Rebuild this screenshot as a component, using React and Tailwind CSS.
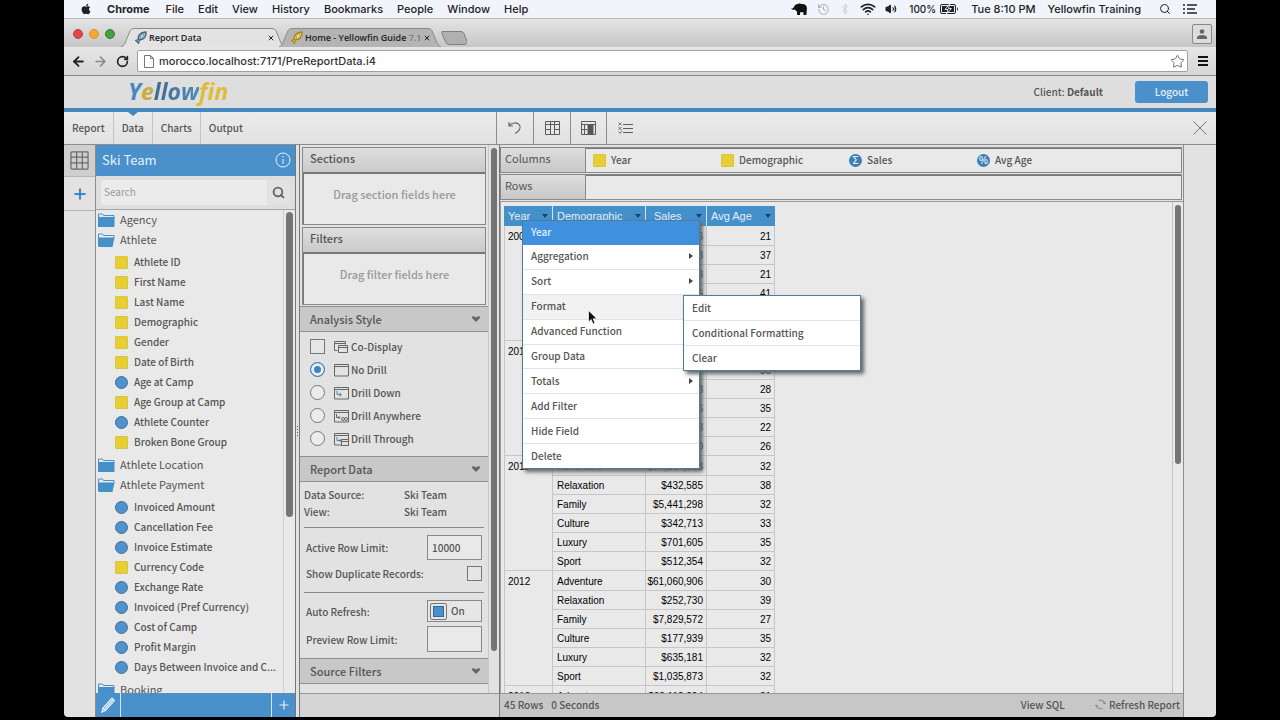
import { useState } from "react";
import { FaApple } from "react-icons/fa";
import { Star, History, Bluetooth, Wifi, Volume2, Search, X, Plus, ArrowLeft, ArrowRight, RotateCw } from "lucide-react";

const MENU_BAR = ["File", "Edit", "View", "History", "Bookmarks", "People", "Window", "Help"];

const FIELD_TREE = [
  { name: "Agency", fields: [] },
  {
    name: "Athlete",
    open: true,
    fields: [
      ["Athlete ID", "dim"],
      ["First Name", "dim"],
      ["Last Name", "dim"],
      ["Demographic", "dim"],
      ["Gender", "dim"],
      ["Date of Birth", "dim"],
      ["Age at Camp", "metric"],
      ["Age Group at Camp", "dim"],
      ["Athlete Counter", "metric"],
      ["Broken Bone Group", "dim"],
    ],
  },
  { name: "Athlete Location", fields: [] },
  {
    name: "Athlete Payment",
    open: true,
    fields: [
      ["Invoiced Amount", "metric"],
      ["Cancellation Fee", "metric"],
      ["Invoice Estimate", "metric"],
      ["Currency Code", "dim"],
      ["Exchange Rate", "metric"],
      ["Invoiced (Pref Currency)", "metric"],
      ["Cost of Camp", "metric"],
      ["Profit Margin", "metric"],
      ["Days Between Invoice and C...", "metric"],
    ],
  },
  { name: "Booking", fields: [] },
];

const REPORT = [
  {
    year: "2009",
    rows: [
      ["Adventure", "$48,310,296", 21],
      ["Relaxation", "$310,448", 37],
      ["Family", "$4,120,838", 21],
      ["Culture", "$298,106", 41],
      ["Luxury", "$588,420", 33],
      ["Sport", "$476,918", 30],
    ],
  },
  {
    year: "2010",
    rows: [
      ["Adventure", "$52,718,640", 31],
      ["Relaxation", "$398,276", 36],
      ["Family", "$4,902,118", 28],
      ["Culture", "$320,596", 35],
      ["Luxury", "$640,238", 22],
      ["Sport", "$498,760", 26],
    ],
  },
  {
    year: "2011",
    rows: [
      ["Adventure", "$57,204,318", 32],
      ["Relaxation", "$432,585", 38],
      ["Family", "$5,441,298", 32],
      ["Culture", "$342,713", 33],
      ["Luxury", "$701,605", 35],
      ["Sport", "$512,354", 32],
    ],
  },
  {
    year: "2012",
    rows: [
      ["Adventure", "$61,060,906", 30],
      ["Relaxation", "$252,730", 39],
      ["Family", "$7,829,572", 27],
      ["Culture", "$177,939", 35],
      ["Luxury", "$635,181", 32],
      ["Sport", "$1,035,873", 32],
    ],
  },
  { year: "2013", rows: [["Adventure", "$63,118,204", 31]] },
];

const CONTEXT_MENU = [
  { label: "Aggregation", sub: true },
  { label: "Sort", sub: true },
  { label: "Format", active: true },
  { label: "Advanced Function" },
  { label: "Group Data" },
  { label: "Totals", sub: true },
  { label: "Add Filter" },
  { label: "Hide Field" },
  { label: "Delete" },
];

const DRILL_OPTIONS = [
  ["none", "No Drill"],
  ["down", "Drill Down"],
  ["anywhere", "Drill Anywhere"],
  ["through", "Drill Through"],
];

const ElephantIcon = () => (
  <svg viewBox="0 0 18 14" className="h-[13px] w-[17px]" fill="#111">
    <path d="M0 5.5c1 .8 2 .6 2.800-.8C3.600 2.400 5 1 7.200 1c1.400-.9 3.200-.6 4.300.2 3-.3 5.300 1.400 5.500 4.300.1 1.500-.2 2.500-.3 3.800l-.3 3.500h-3l-.3-3.100c-1 .4-2.200.4-3.300.1l-.3 3.200H6.500L6.200 9C5 8.700 4.500 7.800 4.200 6.800 2.800 8 .8 7.600 0 5.500z" />
  </svg>
);

const BatteryIcon = () => (
  <svg viewBox="0 0 19 10" className="h-[10px] w-[19px]">
    <rect x="0.5" y="0.500" width="15" height="9" rx="1.500" fill="none" stroke="#222" />
    <rect x="2" y="2" width="12" height="6" fill="#222" />
    <path d="M9.500 0 5 5.500h3L6.500 10 11.500 4.500h-3z" fill="#222" stroke="#f1f4fa" strokeWidth="0.900" />
    <path d="M17 3.200c1.300.5 1.300 3.100 0 3.600z" fill="#222" />
  </svg>
);

const FishIcon = ({ fill, stroke }) => (
  <svg viewBox="0 0 12 13" className="h-[13px] w-[12px] shrink-0">
    <path d="M3.500 8.500C2.500 5 5 1.200 10.800 1c.8 5-2.300 8-6.800 7.800" fill={fill} stroke={stroke} strokeWidth="1.400" />
    <path d="M4 8.500.8 9.500l2.700 2.800L4.500 9" fill={fill} stroke={stroke} strokeWidth="1.200" />
    <ellipse cx="7" cy="5.200" rx="1.200" ry="2.400" transform="rotate(40 7 5.200)" fill="#f4f4f4" stroke={stroke} strokeWidth="0.700" />
  </svg>
);

const TabShape = ({ fill }) => (
  <svg viewBox="0 0 164 19" preserveAspectRatio="none" className="absolute inset-0 h-full w-full">
    <path d="M0 19 Q3 18 4 15 L9 3 Q10 .5 13 .5 H151 Q154 .5 155 3 L160 15 Q161 18 164 19" fill={fill} stroke="#8a8a8a" />
  </svg>
);

const FolderIcon = ({ open }) => (
  <svg viewBox="0 0 17 14" className="h-[14px] w-[17px] shrink-0">
    <path d="M.5 13V1h4l1 1.500h10.500V5" fill="#e9e9e9" stroke="#4a90c8" />
    {open ? (
      <path d="M0 4.500h16.500L14.500 14H.5z" fill="#4490c8" />
    ) : (
      <path d="M0 4h16.500v10H0z" fill="#4490c8" />
    )}
  </svg>
);

const FieldIcon = ({ kind }) =>
  kind === "dim" ? (
    <span className="size-[13px] shrink-0 rounded-[1px] border border-[#d9c53c] bg-[#e8ce36]" />
  ) : (
    <span className="size-[13px] shrink-0 rounded-full border border-[#3f7099] bg-[#4f92cc]" />
  );

const DrillIcon = ({ kind }) => (
  <svg viewBox="0 0 16 14" className="h-[14px] w-[16px] shrink-0" fill="none" stroke="#666">
    {kind === "codisplay" ? (
      <>
        <path d="M1.500 10.500v-9h11v3M1.500 3.500h11M1.500 10.500h3" />
        <path d="M5.500 5.500h9v7h-9zM5.500 7.500h9" fill="#e2e2e2" />
      </>
    ) : (
      <path d="M1.500 1.500h14v11.500h-14zM1.500 3.500h14" />
    )}
    {kind === "down" && <path d="M4 5v3.500h4M6.500 7l2 1.800-2 1.700" stroke="#4a7fae" />}
    {kind === "anywhere" && (
      <>
        <path d="M3.500 5v3.500h3M5.500 7l1.500 1.500L5.500 10" />
        <circle cx="10" cy="10" r="1.500" />
        <circle cx="13" cy="10" r="1.500" />
      </>
    )}
    {kind === "through" && (
      <>
        <path d="M4 5v3.500h4M6.500 7l1.500 1.500L6.500 10" stroke="#4a7fae" />
        <path d="M8.500 7.500h7v6h-7zM8.500 9.500h7" fill="#e2e2e2" />
      </>
    )}
  </svg>
);

const TableIcon = ({ className }) => (
  <svg viewBox="0 0 20 20" className={className} fill="none" stroke="#6b6b6b" strokeWidth="1.300">
    <rect x="1" y="1" width="18" height="18" rx="1" />
    <path d="M1 6.500h18M1 12.500h18M7 1v18M13 1v18" />
  </svg>
);

const UndoIcon = () => (
  <svg viewBox="0 0 16 14" className="h-[14px] w-[16px]" fill="none" stroke="#666" strokeWidth="1.100">
    <path d="M2 1v4h4M2 4.500C5 1.500 10 .8 12.500 4c2 3-.5 6.500-4.500 8.500" />
  </svg>
);

const ColumnsIcon = () => (
  <svg viewBox="0 0 15 14" className="h-[14px] w-[15px]" fill="none" stroke="#5c5c5c">
    <path d="M.5.5h14v3H.5zM.5 3.500h14v10H.5zM5.500.5v13M9.500.5v13M.5 8.500h5M9.500 8.500h5" />
  </svg>
);

const HighlightColumnIcon = () => (
  <svg viewBox="0 0 15 14" className="h-[14px] w-[15px]" fill="none" stroke="#5c5c5c">
    <path d="M.5.5h14v13H.5zM.5 3.500h14M.5 8.500h6M3.500 3.500v10" />
    <path d="M7 3.500h5v10H7z" fill="#555" />
  </svg>
);

const ListIcon = () => (
  <svg viewBox="0 0 15 13" className="h-[13px] w-[15px]" fill="none" stroke="#5c5c5c">
    <path d="M5 2.500h10M5 6.500h10M5 10.500h10" />
    <path d="M.5.5l3 3m0-3-3 3M.5 5l3 3m0-3-3 3M.5 9.500l1.500 2 2-3" strokeWidth="0.800" />
  </svg>
);

const Caret = () => (
  <svg viewBox="0 0 8 6" className="h-[6px] w-[8px]" fill="#666">
    <path d="M.5 0Q2.500 0 4 1.500 5.500 0 7.500 0L8 2 4 6 0 2z" />
  </svg>
);

const MacMenuBar = () => (
  <div className="flex h-[18px] shrink-0 items-center justify-between bg-[#f1f4fa] pl-[16px] pr-[19px] font-['Inter',sans-serif] text-[11px] font-medium leading-[18px] text-[#222]">
    <nav className="flex items-center gap-[14px]">
      <FaApple className="mr-[1px] size-[12px]" aria-label="Apple" />
      <span className="mr-[2px] font-bold">Chrome</span>
      {MENU_BAR.map((item) => (
        <span key={item}>{item}</span>
      ))}
    </nav>
    <div className="flex items-center gap-[12px]">
      <div className="flex items-center gap-[9px]">
        <ElephantIcon />
        <History className="size-[13px] text-[#999]" strokeWidth={1.500} />
        <Bluetooth className="size-[12px] text-[#ccc]" />
        <Wifi className="size-[16px]" strokeWidth={2.500} />
        <Volume2 className="size-[12px]" fill="#222" />
      </div>
      <span className="flex items-center gap-[4px] text-[10px]">
        100% <BatteryIcon />
      </span>
      <span>Tue 8:10 PM</span>
      <span>Yellowfin Training</span>
      <Search className="ml-[6px] size-[12px]" />
      <svg viewBox="0 0 14 10" className="h-[10px] w-[14px]" stroke="#222" strokeWidth="1.500">
        <path d="M0 1h2M4 1h10M0 5h2M4 5h8M0 9h2M4 9h10" />
      </svg>
    </div>
  </div>
);

const BrowserChrome = () => (
  <div className="shrink-0 font-['Inter',sans-serif] text-[#222]">
    <div className="flex h-[29px] items-end border-t border-[#bbb] bg-gradient-to-b from-[#e4e4e4] to-[#c6c6c6] pl-[9px] pr-[4px]">
      <div className="mb-[8px] flex gap-[6px]">
        <span className="size-[10px] rounded-full border border-[#b9403b] bg-[#dd4a45]" />
        <span className="size-[10px] rounded-full border border-[#d8952a] bg-[#f3a935]" />
        <span className="size-[10px] rounded-full border border-[#317d2b] bg-[#43a23b]" />
      </div>
      <div className="relative ml-[6px] flex h-[19px] w-[164px] items-center">
        <TabShape fill="#e3e3e3" />
        <span className="relative flex w-full items-center pl-[14px] pr-[10px] text-[9px]">
          <FishIcon fill="#b9cbd9" stroke="#3f627d" />
          <span className="ml-[2px] flex-1 font-['Open_Sans',sans-serif] font-semibold">Report Data</span>
          <X className="size-[8px]" strokeWidth={3} />
        </span>
      </div>
      <div className="relative -ml-[6px] flex h-[19px] w-[162px] items-center">
        <TabShape fill="#b4b4b4" />
        <span className="relative flex w-full items-center pl-[12px] pr-[10px] text-[9px]">
          <FishIcon fill="#eed545" stroke="#a8861b" />
          <span className="ml-[2px] flex-1 whitespace-nowrap font-['Open_Sans',sans-serif] font-semibold">
            Home - Yellowfin Guide <span className="text-[#777]">7.1</span>
          </span>
          <X className="size-[8px]" strokeWidth={3} />
        </span>
      </div>
      <svg viewBox="0 0 26 14" className="mb-[2px] h-[14px] w-[26px]">
        <path d="M1 .5h19q2 0 3 2l3 8q0 3-2 3H8q-2 0-3-2L1 3z" fill="#b0b0b0" stroke="#808080" />
      </svg>
      <button aria-label="Profile" className="mb-[3px] ml-auto flex size-[20px] items-center justify-center rounded-[2px] border border-[#888] bg-[#dcdcdc]">
        <svg viewBox="0 0 10 10" className="size-[10px]" fill="#666">
          <circle cx="5" cy="2.500" r="2.300" />
          <path d="M0 10V8q1-2 5-2t5 2v2z" />
        </svg>
      </button>
    </div>
    <div className="flex h-[29px] items-center border-b border-[#888] bg-gradient-to-b from-[#e6e6e6] to-[#d6d6d6] pl-[7px] pr-[8px]">
      <button aria-label="Back"><ArrowLeft className="size-[15px]" strokeWidth={3} /></button>
      <button aria-label="Forward" className="ml-[7px] text-[#888]"><ArrowRight className="size-[15px]" strokeWidth={2.500} /></button>
      <button aria-label="Reload" className="ml-[8px]"><RotateCw className="size-[13px]" strokeWidth={3} /></button>
      <div className="ml-[8px] flex h-[22px] flex-1 items-center rounded-[2px] border border-[#a0a0a0] bg-white pl-[6px] pr-[2px]">
        <svg viewBox="0 0 10 13" className="h-[13px] w-[10px]" fill="#fff" stroke="#777">
          <path d="M.5.5h6l3 3v9h-9zM6.500.5v3h3" />
        </svg>
        <input
          aria-label="Address"
          defaultValue="morocco.localhost:7171/PreReportData.i4"
          className="ml-[5px] flex-1 bg-transparent text-[11px] font-medium text-[#333] outline-none"
        />
        <Star className="size-[15px] text-[#666]" strokeWidth={1.500} />
      </div>
      <button aria-label="Chrome menu" className="ml-[10px] flex w-[10px] flex-col gap-[2px]">
        <span className="h-[2px] bg-[#111]" />
        <span className="h-[2px] bg-[#111]" />
        <span className="h-[2px] bg-[#111]" />
      </button>
    </div>
  </div>
);

const Header = () => (
  <header className="flex h-[36px] shrink-0 items-center justify-between border-b-4 border-[#4488bd] bg-[#dedede] pl-[64px] pr-[8px]">
    <a href="#home" className="flex items-baseline pb-[2px] font-['Open_Sans',sans-serif] text-[23px] font-bold italic leading-[30px]">
      <span className="text-[#4689bd]">Y</span>
      <span className="text-[#c9ad3e]">e</span>
      <span className="bg-gradient-to-r from-[#3f6a90] to-[#4f8bb8] bg-clip-text text-transparent">llow</span>
      <span className="text-[#dfbd3c]">fin</span>
    </a>
    <div className="flex items-center gap-[32px] text-[10px] font-medium">
      <span className="pb-[2px]">
        Client: <b>Default</b>
      </span>
      <button className="h-[22px] w-[73px] rounded-[3px] bg-[#4a90cb] leading-[20px] text-[#e6f0f8]">Logout</button>
    </div>
  </header>
);

const NavBar = () => (
  <div className="flex h-[33px] shrink-0 border-b border-[#8c8c8c] bg-gradient-to-b from-[#ebebeb] to-[#e2e2e2] text-[10px] font-medium">
    <nav className="flex w-[433px] border-r border-[#8c8c8c]">
      {["Report", "Data", "Charts", "Output"].map((tab) => (
        <button key={tab} className="relative border-r border-[#c4c4c4] px-[8px] pb-[2px] last:border-r-0">
          {tab === "Data" && (
            <span className="absolute left-1/2 top-0 -ml-[5px] border-x-[5px] border-t-[4px] border-x-transparent border-t-[#4488bd]" />
          )}
          {tab}
        </button>
      ))}
    </nav>
    <button aria-label="Undo" className="flex w-[37px] items-center justify-center border-r border-[#8c8c8c]"><UndoIcon /></button>
    <button aria-label="Columns" className="flex w-[37px] items-center justify-center border-r border-[#8c8c8c]"><ColumnsIcon /></button>
    <button aria-label="Column style" className="flex w-[36px] items-center justify-center border-r border-[#8c8c8c]"><HighlightColumnIcon /></button>
    <button aria-label="Report options" className="flex w-[36px] items-center justify-center"><ListIcon /></button>
    <button aria-label="Close" className="ml-auto mr-[9px]">
      <svg viewBox="0 0 14 14" className="size-[14px]" stroke="#777">
        <path d="M.5.5l13 13M13.500.5l-13 13" />
      </svg>
    </button>
  </div>
);

const FieldPanel = () => (
  <>
    <div className="flex w-[32px] shrink-0 flex-col border-r border-[#8c8c8c]">
      <button aria-label="Tables" className="flex h-[32px] items-center justify-center border-b border-[#b5b5b5] bg-[#cfcfcf]">
        <TableIcon className="size-[19px]" />
      </button>
      <button aria-label="Add" className="flex h-[34px] items-center justify-center border-b border-[#b5b5b5] text-[#3c86c2]">
        <Plus className="size-[16px]" strokeWidth={3} />
      </button>
    </div>
    <aside className="flex w-[200px] shrink-0 flex-col border-r border-[#777] bg-[#e9e9e9]">
      <div className="flex h-[31px] shrink-0 items-center justify-between bg-[#4a90cb] pb-[1px] pl-[6px] pr-[4px] text-[13px] text-[#e8f2fa]">
        Ski Team
        <svg viewBox="0 0 16 16" className="size-[16px]" fill="none" stroke="#e8f2fa">
          <circle cx="8" cy="8" r="7" />
          <path d="M8 7v5M8 4v1.500" />
        </svg>
      </div>
      <div className="h-[34px] shrink-0 border-b border-[#a5a5a5] bg-[#dedede] px-[5px] py-[4px]">
        <div className="flex h-[25px] rounded-[3px] bg-[#ebebeb]">
          <input aria-label="Search fields" placeholder="Search" className="w-[166px] pb-[2px] pl-[3px] text-[10px] outline-none placeholder:text-[#999]" />
          <button aria-label="Search" className="flex flex-1 items-center justify-center bg-[#e2e2e2] text-[#666]">
            <Search className="size-[13px]" strokeWidth={3.500} />
          </button>
        </div>
      </div>
      <div className="flex min-h-0 flex-1">
        <div className="flex-1 overflow-hidden">
          {FIELD_TREE.map((folder) => (
            <div key={folder.name}>
              <div className="flex h-[20px] items-center gap-[5px] pl-[2px] text-[11px] leading-[18px]">
                <FolderIcon open={folder.open} />
                <span className="pb-[2px]">{folder.name}</span>
              </div>
              {folder.fields.length > 0 && (
                <div className="pb-[3px] pt-[2px]">
                  {folder.fields.map(([name, kind]) => (
                    <div key={name} className="flex h-[20px] items-center gap-[6px] whitespace-nowrap pl-[19px] text-[10px] font-medium leading-[20px]">
                      <FieldIcon kind={kind} />
                      <span>{name}</span>
                    </div>
                  ))}
                </div>
              )}
            </div>
          ))}
        </div>
        <div className="w-[12px] border-l border-[#cfcfcf] px-[2px] pt-[2px]">
          <div className="h-[305px] w-[7px] rounded-full bg-[#757575]" />
        </div>
      </div>
      <div className="flex h-[24px] shrink-0 bg-[#4a90cb]">
        <button aria-label="Edit" className="flex w-[25px] items-center justify-center border-r border-[#d5e5f2]">
          <svg viewBox="0 0 14 16" className="h-[16px] w-[14px]" fill="none" stroke="#e8f2fa" strokeWidth="1.200">
            <path d="M1 15l1-4L11 1l2.500 2.500L4.500 13.500zM2 11l2.500 2.500M4 11.500 12 2.500" />
          </svg>
        </button>
        <button aria-label="Add field" className="ml-auto flex w-[24px] items-center justify-center border-l border-[#d5e5f2] text-[#e8f2fa]">
          <Plus className="size-[14px]" />
        </button>
      </div>
    </aside>
  </>
);

const DropBox = ({ title, hint }) => (
  <div className="mx-[2px] border border-[#888]">
    <div className="h-[24px] bg-gradient-to-b from-[#dedede] to-[#cacaca] pl-[7px] text-[11px] font-medium leading-[21px]">{title}</div>
    <div className="h-[52px] border-l border-t-2 border-[#777] bg-[#e9e9e9] text-center text-[11px] leading-[40px] text-[#999]">{hint}</div>
  </div>
);

const SectionHeader = ({ children }) => (
  <button className="flex h-[26px] w-full items-center justify-between border-y border-[#8f8f8f] bg-[#c8c8c8] pl-[10px] pr-[8px] text-[11px] font-medium leading-[22px]">
    {children}
    <Caret />
  </button>
);

const OptionsPanel = () => {
  const [drill, setDrill] = useState("none");
  const [autoRefresh, setAutoRefresh] = useState(true);

  return (
    <section className="flex w-[201px] shrink-0 flex-col border-x border-[#777] bg-[#e2e2e2]">
      <div className="flex min-h-0 flex-1">
        <div className="flex w-[188px] flex-col overflow-hidden pt-[2px] text-[10px] font-medium">
          <div className="flex flex-col gap-[2px]">
            <DropBox title="Sections" hint="Drag section fields here" />
            <DropBox title="Filters" hint="Drag filter fields here" />
          </div>
          <div className="mt-[1px]">
            <SectionHeader>Analysis Style</SectionHeader>
          </div>
          <div className="pb-[6px] pt-[3px]">
            <label className="flex h-[23px] items-center pl-[10px] leading-[23px]">
              <input type="checkbox" className="size-[15px] appearance-none border border-[#777] bg-[#e6e6e6]" />
              <span className="ml-[8px]"><DrillIcon kind="codisplay" /></span>
              <span className="ml-[2px]">Co-Display</span>
            </label>
            {DRILL_OPTIONS.map(([value, label]) => (
              <label key={value} className="flex h-[23px] items-center pl-[10px] leading-[23px]">
                <input
                  type="radio"
                  name="drill"
                  checked={drill === value}
                  onChange={() => setDrill(value)}
                  className="size-[15px] appearance-none rounded-full border border-[#777] bg-[#ececec] checked:border-[#3c7db4] checked:bg-[#3c86c2] checked:shadow-[inset_0_0_0_3px_#ececec]"
                />
                <span className="ml-[8px]"><DrillIcon kind={value} /></span>
                <span className="ml-[2px]">{label}</span>
              </label>
            ))}
          </div>
          <SectionHeader>Report Data</SectionHeader>
          <dl className="mx-[4px] grid grid-cols-[100px_1fr] border-b border-[#888] pb-[7px] pt-[4px] leading-[17px]">
            <dt>Data Source:</dt>
            <dd>Ski Team</dd>
            <dt>View:</dt>
            <dd>Ski Team</dd>
          </dl>
          <div className="mx-[4px] flex flex-col gap-[6px] border-b border-[#888] pb-[11px] pl-[2px] pr-[2px] pt-[7px]">
            <label className="flex h-[25px] items-center justify-between">
              Active Row Limit:
              <input defaultValue="10000" className="h-[25px] w-[55px] border border-[#888] bg-[#e9e9e9] px-[4px] outline-none" />
            </label>
            <label className="flex h-[15px] items-center justify-between">
              Show Duplicate Records:
              <input type="checkbox" className="size-[15px] appearance-none border border-[#777] bg-[#e6e6e6]" />
            </label>
          </div>
          <div className="mx-[4px] flex flex-col gap-[4px] px-[2px] pb-[6px] pt-[7px]">
            <div className="flex h-[22px] items-center justify-between">
              <span id="auto-refresh">Auto Refresh:</span>
              <button
                role="switch"
                aria-checked={autoRefresh}
                aria-labelledby="auto-refresh"
                onClick={() => setAutoRefresh(!autoRefresh)}
                className="flex h-[22px] w-[55px] items-center gap-[4px] border border-[#888] bg-[#e6e6e6] pl-[2px] leading-[18px]"
              >
                <span className="flex size-[17px] items-center justify-center rounded-[2px] border border-[#777]">
                  <span className="size-[11px] border border-[#2f6a9c] bg-[#4a90cb]" />
                </span>
                {autoRefresh ? "On" : "Off"}
              </button>
            </div>
            <label className="flex h-[26px] items-center justify-between">
              Preview Row Limit:
              <input className="h-[26px] w-[55px] border border-[#888] bg-[#e9e9e9] px-[4px] outline-none" />
            </label>
          </div>
          <SectionHeader>Source Filters</SectionHeader>
        </div>
        <div className="flex-1 border-l border-[#c8c8c8] px-[2px] pt-[3px]">
          <div className="h-[503px] w-[6px] rounded-full bg-[#757575]" />
        </div>
      </div>
      <div className="h-[24px] shrink-0 border-t border-[#999] bg-[#d5d5d5]" />
    </section>
  );
};

const Shelf = ({ title, children }) => (
  <div className="mr-[1px] flex h-[26px] border border-[#888]">
    <div className="w-[85px] shrink-0 border-r border-[#888] bg-gradient-to-b from-[#dedede] to-[#c8c8c8] pl-[4px] text-[11px] leading-[20px]">
      {title}
    </div>
    <div className="flex flex-1 items-center border-t border-[#777] bg-[#e9e9e9] pl-[7px]">{children}</div>
  </div>
);

const ShelfField = ({ kind, symbol, children }) => (
  <div className="flex w-[128px] items-center gap-[5px] pb-[1px] text-[10px] font-medium leading-[20px]">
    {symbol ? (
      <span className="flex size-[13px] items-center justify-center rounded-full bg-[#3d7fb5] font-['Liberation_Sans',sans-serif] text-[10px] leading-[13px] text-white">
        {symbol}
      </span>
    ) : (
      <FieldIcon kind={kind} />
    )}
    {children}
  </div>
);

const ReportTable = () => (
  <table className="w-[271px] table-fixed border-separate border-spacing-0 font-['Liberation_Sans',Arial,sans-serif] text-[10px] text-black">
    <colgroup>
      <col className="w-[49px]" />
      <col className="w-[93px]" />
      <col className="w-[61px]" />
      <col className="w-[68px]" />
    </colgroup>
    <thead>
      <tr>
        {["Year", "Demographic", "Sales", "Avg Age"].map((name) => (
          <th key={name} className="h-[20px] border-r border-[#d8e4ee] bg-[#4490cb] p-0 text-left text-[11px] font-normal text-[#e4eef6] last:border-r-0">
            <span className={`flex items-center justify-between pr-[4px] ${name === "Sales" ? "pl-[8px]" : "pl-[4px]"}`}>
              {name}
              <span className="border-x-[3px] border-t-[4px] border-x-transparent border-t-[#1d4466]" />
            </span>
          </th>
        ))}
      </tr>
    </thead>
    <tbody className="leading-[16px]">
      {REPORT.map(({ year, rows }) =>
        rows.map(([demographic, sales, age], i) => (
          <tr key={year + demographic} className={i === 0 ? "h-[20px]" : "h-[19px]"}>
            {i === 0 && (
              <td rowSpan={rows.length} className="border-x border-b border-[#c6c6c6] p-0 pl-[3px] pt-[3px] align-top">
                {year}
              </td>
            )}
            <td className="border-b border-r border-[#c6c6c6] p-0 pl-[4px] pt-[2px]">{demographic}</td>
            <td className="border-b border-r border-[#c6c6c6] p-0 pr-[3px] pt-[2px] text-right">{sales}</td>
            <td className="border-b border-r border-[#c6c6c6] p-0 pr-[3px] pt-[2px] text-right">{age}</td>
          </tr>
        ))
      )}
    </tbody>
  </table>
);

const ContextMenu = () => (
  <>
    <div role="menu" className="absolute left-[18px] top-[14px] flex h-[249px] w-[178px] flex-col border border-[#4d7f9c] bg-white text-[10px] font-medium text-[#555] shadow-[3px_3px_4px_#666]">
      <div className="flex flex-1 items-center bg-[#3f90df] pb-[1px] pl-[8px] leading-[20px] text-[#e4f0fb]">Year</div>
      {CONTEXT_MENU.map(({ label, sub, active }) => (
        <button
          key={label}
          role="menuitem"
          className={`flex flex-1 items-center justify-between border-b border-[#e4e4e4] pb-[1px] pl-[8px] pr-[6px] leading-[20px] last:border-b-0 ${active ? "bg-[#f2f2f2]" : ""}`}
        >
          {label}
          {sub && <span className="border-y-[3px] border-l-[4px] border-y-transparent border-l-[#444]" />}
        </button>
      ))}
    </div>
    <div role="menu" className="absolute left-[179px] top-[89px] flex h-[76px] w-[178px] flex-col border border-[#4d7f9c] bg-white text-[10px] font-medium text-[#555] shadow-[3px_3px_4px_#666]">
      {["Edit", "Conditional Formatting", "Clear"].map((label) => (
        <button key={label} role="menuitem" className="flex flex-1 items-center border-b border-[#e4e4e4] pl-[8px] leading-[20px] last:border-b-0">
          {label}
        </button>
      ))}
    </div>
    <svg viewBox="0 0 10 15" className="absolute left-[84px] top-[104px] h-[15px] w-[10px]">
      <path d="M.5.5v11.500l2.700-2.500 1.800 4.500 2-.8-1.800-4.400h3.800z" fill="#111" stroke="#fff" strokeWidth="0.700" />
    </svg>
  </>
);

const ReportArea = () => (
  <main className="flex min-w-0 flex-1 flex-col border-r border-[#8c8c8c] bg-[#e2e2e2]">
    <div className="flex shrink-0 flex-col gap-[1px] pb-[1px] pt-[2px]">
      <Shelf title="Columns">
        <ShelfField kind="dim">Year</ShelfField>
        <ShelfField kind="dim">Demographic</ShelfField>
        <ShelfField symbol="Σ">Sales</ShelfField>
        <ShelfField symbol="%">Avg Age</ShelfField>
      </Shelf>
      <Shelf title="Rows" />
    </div>
    <div className="flex min-h-0 flex-1 border-l border-t border-[#999] bg-[#e9e9e9]">
      <div className="relative ml-[3px] mt-[4px] flex-1">
        <div className="h-full overflow-hidden">
          <ReportTable />
        </div>
        <ContextMenu />
      </div>
      <div className="w-[11px] border-l border-[#c4c4c4] px-[2px] pt-[3px]">
        <div className="h-[259px] w-[6px] rounded-full bg-[#757575]" />
      </div>
    </div>
    <footer className="flex h-[24px] shrink-0 items-center border-t border-[#999] bg-[#c7c7c7] pb-[2px] pl-[4px] pr-[3px] text-[10px] font-medium leading-[20px]">
      <span>45 Rows</span>
      <span className="ml-[8px]">0 Seconds</span>
      <button className="ml-auto">View SQL</button>
      <button className="ml-[30px] flex items-center gap-[3px]">
        <svg viewBox="0 0 12 12" className="size-[11px]" fill="none" stroke="#5b83a3">
          <path d="M4 1.500h3q3.500 0 3.500 4M9 4l1.500 1.500L12 4M8 10.500H5q-3.500 0-3.500-4M0 8l1.500-1.500L3 8" />
        </svg>
        Refresh Report
      </button>
    </footer>
  </main>
);

export default function App() {
  return (
    <div className="flex h-screen flex-col overflow-hidden bg-black px-[64px] pb-[3px] font-['Noto_Sans_CJK_SC','Noto_Sans_CJK_JP',sans-serif] text-[#555]">
      <MacMenuBar />
      <BrowserChrome />
      <Header />
      <NavBar />
      <div className="flex min-h-0 flex-1 overflow-hidden rounded-b-[4px] bg-[#e2e2e2]">
        <FieldPanel />
        <div className="flex w-[3px] shrink-0 flex-col items-center justify-center gap-[2px]">
          <span className="size-[1px] bg-[#555]" />
          <span className="size-[1px] bg-[#555]" />
          <span className="size-[1px] bg-[#555]" />
          <span className="size-[1px] bg-[#555]" />
        </div>
        <OptionsPanel />
        <ReportArea />
        <div className="w-[32px] shrink-0" />
      </div>
    </div>
  );
}
